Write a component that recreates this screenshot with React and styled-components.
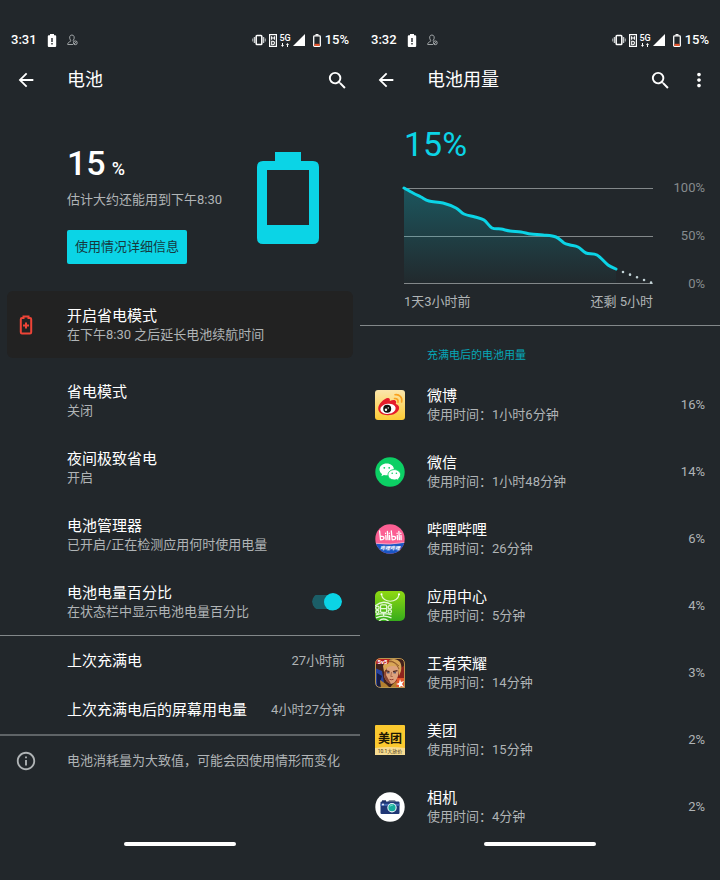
import React from "react";
import styled, { createGlobalStyle } from "styled-components";
import { MdArrowBack, MdInfoOutline, MdMoreVert, MdSearch } from "react-icons/md";

const color = {
  page: "#22272b",
  card: "#222222",
  accent: "#0bd4e6",
  heading: "#06a8b8",
  text: "#ffffff",
  muted: "#b0b4b6",
  faint: "#868b8e",
  line: "#83888a",
  alert: "#ee4437",
};

const GlobalStyle = createGlobalStyle`
  *, *::before, *::after { box-sizing: border-box; }
  body {
    margin: 0;
    background: ${color.page};
    color: ${color.text};
    font-family: Roboto, "Noto Sans CJK SC", sans-serif;
  }
  button { font-family: inherit; }
  svg { display: block; flex: none; }
`;

const Screens = styled.div`
  display: flex;
  min-height: 100vh;
`;

const Screen = styled.section`
  flex: 1 1 0;
  min-width: 0;
  display: flex;
  flex-direction: column;
  padding: 24px 0 34px;
`;

const StatusBar = styled.div`
  display: flex;
  align-items: center;
  justify-content: space-between;
  height: 32px;
  padding: 0 11px;
  font-size: 13px;
  font-weight: 500;
  line-height: 16px;
`;

const StatusGroup = styled.div`
  display: flex;
  align-items: center;
  gap: ${(p) => p.$gap}px;
`;

const Toolbar = styled.header`
  display: grid;
  grid-template-columns: 52px 1fr auto;
  align-items: center;
  height: 48px;
  padding: 0 ${(p) => p.$right}px 0 15px;
`;

const Title = styled.h1`
  margin: 0;
  font-size: 18px;
  font-weight: 400;
  line-height: 26px;
`;

const Actions = styled.div`
  display: flex;
  align-items: center;
  gap: 16px;
`;

const IconButton = styled.button`
  display: flex;
  width: max-content;
  padding: 0;
  border: 0;
  background: none;
  color: inherit;
  cursor: pointer;
`;

const HomeBar = styled.div`
  width: 112px;
  height: 4px;
  margin: auto auto 0;
  border-radius: 2px;
  background: #ffffff;
`;

const Hero = styled.div`
  display: flex;
  justify-content: space-between;
  padding: 39px 41px 27px 67px;
`;

const Level = styled.div`
  display: flex;
  align-items: baseline;
  gap: 6px;
  font-size: 34px;
  font-weight: 500;
  line-height: 40px;
`;

const LevelUnit = styled.span`
  font-size: 18px;
  line-height: 20px;
`;

const Estimate = styled.p`
  margin: 8px 0 21px;
  color: ${color.muted};
  font-size: 13px;
  line-height: 18px;
`;

const DetailsButton = styled.button`
  height: 34px;
  padding: 0 8px;
  border: 0;
  border-radius: 2px;
  background: ${color.accent};
  color: #16393f;
  font-size: 13px;
  line-height: 18px;
  cursor: pointer;
`;

const HeroArt = styled.div`
  padding-top: 9px;
`;

const TipCard = styled.div`
  display: grid;
  grid-template-columns: 52px 1fr;
  align-items: center;
  height: 67px;
  margin: 0 7px 9px;
  padding: 0 8px;
  border-radius: 6px;
  background: ${color.card};
`;

const List = styled.ul`
  margin: 0;
  padding: 0;
  list-style: none;
`;

const Row = styled.li`
  display: grid;
  grid-template-columns: 52px 1fr auto;
  align-items: center;
  min-height: ${(p) => (p.$compact ? 49 : 67)}px;
  padding: 0 15px;
`;

const Lead = styled.div`
  display: flex;
  color: ${color.muted};
`;

const Name = styled.div`
  font-size: 15px;
  line-height: 20px;
`;

const NameLabel = styled(Name).attrs({ as: "label" })`
  display: block;
`;

const Detail = styled.div`
  color: ${color.muted};
  font-size: 13px;
  line-height: 18px;
`;

const Rule = styled.hr`
  width: 100%;
  height: ${(p) => p.$weight || 1}px;
  margin: 0;
  border: 0;
  background: ${(p) => (p.$weight ? "#5f6467" : color.line)};
`;

const Switch = styled.input.attrs({ type: "checkbox", role: "switch" })`
  appearance: none;
  display: flex;
  align-items: center;
  width: 30px;
  height: 18px;
  margin: 0 3px;
  background: linear-gradient(#1b5e67, #1b5e67) center / 100% 14px no-repeat;
  border-radius: 9px;
  clip-path: inset(0 round 9px);
  cursor: pointer;

  &::before {
    content: "";
    width: 18px;
    height: 18px;
    border-radius: 50%;
    background: #b5babc;
  }
  &:checked::before {
    margin-left: auto;
    background: ${color.accent};
  }
`;

const Usage = styled.div`
  padding: 20px 15px 14px 44px;
`;

const UsageLevel = styled.div`
  margin-bottom: 15px;
  color: ${color.accent};
  font-size: 34px;
  line-height: 40px;
`;

const ChartGrid = styled.div`
  display: grid;
  grid-template-columns: 1fr 52px;
`;

const Plot = styled.svg`
  width: 100%;
  height: auto;
  margin: 9px 0;
  overflow: visible;
`;

const Scale = styled.div`
  display: flex;
  flex-direction: column;
  justify-content: space-between;
  color: ${color.faint};
  font-size: 13px;
  line-height: 18px;
  text-align: right;
`;

const Span = styled.div`
  display: flex;
  justify-content: space-between;
  color: ${color.muted};
  font-size: 13px;
  line-height: 18px;
`;

const SectionTitle = styled.h2`
  margin: 0;
  padding: 22px 15px 7px 67px;
  color: ${color.heading};
  font-size: 11px;
  font-weight: 400;
  line-height: 16px;
`;

/* ---------- status icons ---------- */

const BatteryWarn = () => (
  <svg width="10" height="13" viewBox="0 0 10 13">
    <path d="M3 0h4v1.3h1.2q1 0 1 1V12q0 1-1 1H1.8q-1 0-1-1V2.3q0-1 1-1H3z" fill="#fff" />
    <path d="M5 4v4M5 9v1.4" stroke={color.page} strokeWidth="1.4" />
  </svg>
);

const Person = () => (
  <svg width="11" height="12" viewBox="0 0 11 12" fill="none" stroke="#aeb2b4" strokeWidth=".9">
    <path d="M6 10.5H.7C.7 8.6 2 8 3.3 7.5 4 7.2 3.8 6.6 3.4 6 2 3.8 2.5 1 4.9 1s3 2.800 1.600 5c-.4.6-.5 1.100 0 1.400" />
    <circle cx="8.300" cy="8.800" r="1.900" />
    <path d="M7 10.100l2.600-2.600" />
  </svg>
);

const Vibrate = () => (
  <svg width="14" height="12" viewBox="0 0 14 12" fill="none">
    <rect x="4.200" y="1.500" width="5.600" height="9" rx=".8" stroke="#fff" strokeWidth="1.500" />
    <path d="M2.500 3v6M11.500 3v6" stroke="#c6c9ca" strokeWidth="1.500" />
    <path d="M.7 4.500v3M13.300 4.500v3" stroke="#a0a4a6" strokeWidth="1.200" />
  </svg>
);

const HdBadge = () => (
  <svg width="8" height="13" viewBox="0 0 8 13" fill="none" stroke="#fff">
    <rect x=".6" y=".6" width="6.800" height="11.800" strokeWidth="1.200" />
    <path d="M2.600 2.200v3.600M5.400 2.200v3.600M2.600 4h2.800M2.700 7.300h1.200q1.500 0 1.500 1.700t-1.500 1.700H2.700z" strokeWidth="1.100" />
  </svg>
);

const NetworkBox = styled.div`
  display: flex;
  flex-direction: column;
  align-items: center;
  font-size: 9px;
  line-height: 9px;
`;

const Network = () => (
  <NetworkBox>
    5G
    <svg width="8" height="4" viewBox="0 0 8 4" fill="#fff">
      <path d="M0 2h3L1.500 4zM1 0h1v2H1zM5 2l1.500-2L8 2zM6 2h1v2H6z" />
    </svg>
  </NetworkBox>
);

const Signal = () => (
  <svg width="12" height="12" viewBox="0 0 12 12">
    <path d="M12 0v12H0z" fill="#fff" />
  </svg>
);

const BatteryLow = () => (
  <svg width="8" height="13" viewBox="0 0 8 13">
    <path d="M2.500 0h3v1.500h-3z" fill="#fff" />
    <rect x=".7" y="1.900" width="6.600" height="10.400" rx=".8" fill="none" stroke="#fff" strokeWidth="1.300" />
    <path d="M1.400 9.800h5.200v2.200H1.400z" fill="#e2552f" />
  </svg>
);

function PhoneStatus({ time }) {
  return (
    <StatusBar>
      <StatusGroup $gap={10}>
        <span>{time}</span>
        <BatteryWarn />
        <Person />
      </StatusGroup>
      <StatusGroup $gap={3}>
        <Vibrate />
        <StatusGroup $gap={2}>
          <HdBadge />
          <Network />
          <StatusGroup $gap={8}>
            <Signal />
            <StatusGroup $gap={4}>
              <BatteryLow />
              <span>15%</span>
            </StatusGroup>
          </StatusGroup>
        </StatusGroup>
      </StatusGroup>
    </StatusBar>
  );
}

/* ---------- page icons ---------- */

const BigBattery = () => (
  <svg width="62" height="93" viewBox="0 0 62 93">
    <path
      fill={color.accent}
      fillRule="evenodd"
      d="M18 0h26v9h12q6 0 6 6v71q0 6-6 6H6q-6 0-6-6V15q0-6 6-6h12zM10 18v55h42V18z"
    />
  </svg>
);

const SaverIcon = () => (
  <svg width="22" height="22" viewBox="0 0 22 22" fill="none" stroke={color.alert} strokeWidth="2">
    <path d="M8.500 4V2.500h5V4H15q1.200 0 1.200 1.200v13.100q0 1.200-1.200 1.200H7q-1.200 0-1.200-1.200V5.200Q5.800 4 7 4z" />
    <path d="M11 8.500v6M8 11.500h6" />
  </svg>
);

/* ---------- app icons ---------- */

const AppSvg = ({ children }) => (
  <svg width="30" height="30" viewBox="0 0 30 30" aria-hidden="true">
    {children}
  </svg>
);

const Weibo = () => (
  <AppSvg>
    <linearGradient id="wb" x1="0" y1="0" x2="0" y2="1">
      <stop offset="0" stopColor="#fbe6ac" />
      <stop offset="1" stopColor="#fdcb35" />
    </linearGradient>
    <rect width="30" height="30" rx="3" fill="url(#wb)" />
    <path
      d="M3.200 18.500c0-4.500 6-10.200 9.600-10.500 2-.1 2.400 1.300 2 3 2.800-1.200 6-1.400 6.300.8.100.8-.1 1.500-.4 2.200 2 .6 3.600 1.800 3.400 4.200-.3 4.200-5.600 7-11.200 7-5.400 0-9.700-2.600-9.700-6.700z"
      fill="#e51c2a"
    />
    <ellipse cx="13" cy="18.800" rx="7.700" ry="5.100" fill="#fff" transform="rotate(-7 13 18.800)" />
    <circle cx="12.200" cy="18.700" r="4" fill="#15120f" />
    <circle cx="11" cy="19.800" r="1.200" fill="#fff" />
    <circle cx="13.300" cy="17.900" r=".7" fill="#fff" />
    <path d="M19.500 8.500c2.500-.3 4 1.300 3.500 3.600M20 4.700c4.600-.6 7.700 2.800 6.600 7.300" fill="none" stroke="#f9a01e" strokeWidth="1.600" strokeLinecap="round" />
  </AppSvg>
);

const WeChat = () => (
  <AppSvg>
    <circle cx="15" cy="15" r="14.700" fill="#0ccf64" />
    <path d="M11.700 6.500c-4 0-7.200 2.600-7.200 5.900 0 1.900 1 3.500 2.600 4.600l-.7 2.200 2.500-1.300c.9.300 1.800.4 2.800.4 4 0 7.200-2.600 7.200-5.900s-3.200-5.900-7.200-5.900z" fill="#fff" />
    <path
      d="M19.300 12.600c3.500 0 6.300 2.300 6.300 5.200 0 1.600-.9 3-2.200 4l.5 1.900-2.100-1.100c-.8.200-1.600.4-2.500.4-3.500 0-6.300-2.300-6.300-5.200s2.800-5.200 6.300-5.200z"
      fill="#fff"
      stroke="#0ccf64"
      strokeWidth=".9"
    />
    <g fill="#0ccf64">
      <circle cx="9.300" cy="10.800" r=".9" />
      <circle cx="14.200" cy="10.800" r=".9" />
      <circle cx="17.200" cy="16.300" r=".8" />
      <circle cx="21.400" cy="16.300" r=".8" />
    </g>
  </AppSvg>
);

const Bilibili = () => (
  <AppSvg>
    <clipPath id="bl">
      <circle cx="15" cy="15" r="14.700" />
    </clipPath>
    <g clipPath="url(#bl)">
      <rect width="30" height="30" fill="#fb5f93" />
      <path d="M0 19.500q15 2 30-1V30H0z" fill="#1a56c4" />
      <path d="M0 19.300q15 2 30-1" fill="none" stroke="#f7c3dc" strokeWidth=".7" />
    </g>
    <g fill="none" stroke="#fff" strokeWidth="1.300" strokeLinecap="round" strokeLinejoin="round">
      <path d="M4.600 7l.9 8.800q3.500-.1 3.500-1.900T5.300 12.200M10.800 11.500l.3 4.200M12.400 7.500l.6 8.200M14.500 11.500l.2 4.200" />
      <path d="M16.300 7l.9 8.800q3.500-.1 3.500-1.900T17 12.200M22.300 11.500l.3 4.200M23.900 7.500l.5 8.200M26 11.500l.1 4.200" />
      <path d="M10.600 9.200v.2M14.300 9.200v.2M22.100 9.200v.2M25.800 9.200v.2" />
    </g>
    <text x="15" y="26" textAnchor="middle" fontSize="5" fontWeight="700" fontStyle="italic" fill="#fff">哔哩哔哩</text>
  </AppSvg>
);

const AppCenter = () => (
  <AppSvg>
    <linearGradient id="ac" x1="0" y1="0" x2="0" y2="1">
      <stop offset="0" stopColor="#8fd913" />
      <stop offset="1" stopColor="#36ac1b" />
    </linearGradient>
    <clipPath id="acc">
      <rect width="30" height="30" rx="5" />
    </clipPath>
    <g clipPath="url(#acc)">
      <rect width="30" height="30" fill="url(#ac)" />
      <path d="M6.500 3.500c1 9 16.500 9 17.500 0" fill="none" stroke="#e7f8d4" strokeWidth="1.200" strokeLinecap="round" />
      <circle cx="6.500" cy="3.300" r="1" fill="#fff" />
      <circle cx="24" cy="3.300" r="1" fill="#fff" />
      <g fill="none" stroke="#e3f8d8" strokeWidth="1.300">
        <path d="M0 15q8-7 17-1" />
        <rect x="5.500" y="13.800" width="6.200" height="7.700" rx="1.500" />
        <path d="M6 17.600h5.500M8.600 21.500v3M1 23.800q7.500-2.500 15.500 0M1 26.800q7.500-3.500 15.500 0M4 30q4.500-4 9.500 0" />
        <circle cx="14.800" cy="16.300" r="1.700" />
        <circle cx="14.800" cy="20.500" r="1.700" />
        <circle cx="2.400" cy="16.800" r="1.700" />
        <circle cx="2.400" cy="20.800" r="1.500" />
      </g>
    </g>
  </AppSvg>
);

const Kings = () => (
  <AppSvg>
    <clipPath id="kg">
      <path d="M6 0h18q6 0 6 6v24H6q-6 0-6-6V6q0-6 6-6z" />
    </clipPath>
    <g clipPath="url(#kg)">
      <rect width="30" height="30" fill="#41211c" />
      <path d="M0 10l7 3 3 17H0z" fill="#28439c" />
      <path d="M2 15l5 3-2 6 6 6H2z" fill="#151b42" />
      <path d="M23 12l7-5v20H18z" fill="#8e231d" />
      <path d="M9 8q8-5 15 0l-1 10q-2 7-7 8-6-2-7-9z" fill="#dda27d" />
      <path d="M9 8l3 2-1 7 4 7 1 2q-6-2-7-9z" fill="#8a4633" />
      <path d="M8 8Q10 1 19 1q9 1 7 12l-2 5-1-9q-5-2-10 0l-4 5z" fill="#d9a656" />
      <path d="M11 5q6-4 13 3M13 3q7-1 11 8" fill="none" stroke="#8d562b" strokeWidth=".9" />
      <path d="M10.500 12.700l4 1M18 13.700l4.500-1" stroke="#532a20" strokeWidth="1.200" />
      <path d="M12 14.800h2.500M18.500 14.800H21" stroke="#253a65" strokeWidth="1" />
      <path d="M16.500 14l-.7 4.500h2" fill="none" stroke="#a15e43" strokeWidth=".8" />
      <path d="M14.500 21.300q2 .8 4 0" stroke="#943f32" strokeWidth="1" fill="none" />
      <path d="M5 22l6 4 4 4H6zM17 27l6-5v8h-8z" fill="#b3802f" />
      <path d="M0 0h15l-2 6H0z" fill="#bb211d" />
      <text x="2.500" y="6" fontSize="6" fontWeight="700" fill="#fff">5v5</text>
      <path d="M22 20h8v10h-9z" fill="#e5562b" />
      <path d="M25 21l1 3 3-1-2 3 2 3-3-1-2 2v-3l-3-1 3-1z" fill="#fff" />
    </g>
    <path d="M6 .5h18q5.500 0 5.500 5.500v23.500H6Q.5 29.500.5 24V6Q.5.500 6 .5z" fill="none" stroke="#b8954f" strokeWidth="1" />
  </AppSvg>
);

const Meituan = () => (
  <AppSvg>
    <rect width="30" height="30" rx="1" fill="#fbc92f" />
    <path d="M0 23q15-2 30 0v7H0z" fill="#f7dc92" />
    <text x="15" y="17.500" textAnchor="middle" fontSize="12" fontWeight="700" fill="#1d1705">美团</text>
    <text x="15" y="28" textAnchor="middle" fontSize="5" fill="#3f3212">10.1大放价</text>
  </AppSvg>
);

const Camera = () => (
  <AppSvg>
    <circle cx="15" cy="15" r="14.700" fill="#fff" />
    <path d="M7 8.300h4v1.700H7z" fill="#1d2c5c" />
    <rect x="5.500" y="9.500" width="19" height="12.500" rx="1" fill="#203775" />
    <path d="M5.500 11.800h19v2h-19z" fill="#466bb5" />
    <path d="M13 9.500l1-1h6l1 1z" fill="#14264f" />
    <circle cx="17" cy="15.700" r="4.700" fill="#e8f6f6" />
    <circle cx="17" cy="15.700" r="3.600" fill="#16ac9d" />
    <path d="M14.800 14.500q1-1.600 3-1.400" fill="none" stroke="#91e8d7" strokeWidth=".9" />
    <circle cx="8" cy="12.500" r=".9" fill="#fff" />
  </AppSvg>
);

/* ---------- discharge chart ---------- */

const points = [
  [0, 0], [9, 5], [17, 9], [25, 13], [39, 15], [52, 20], [60, 26], [71, 29],
  [80, 32], [88, 40], [97, 41], [106, 43], [117, 44], [127, 46], [139, 47],
  [152, 49], [160, 55], [166, 57], [174, 59], [182, 65], [193, 67], [204, 77], [212, 81],
];

function smoothPath(pts) {
  return pts.slice(1).reduce((d, p, i) => {
    const a = pts[Math.max(i - 1, 0)];
    const b = pts[i];
    const c = pts[Math.min(i + 2, pts.length - 1)];
    const c1 = [b[0] + (p[0] - a[0]) / 6, b[1] + (p[1] - a[1]) / 6];
    const c2 = [p[0] - (c[0] - b[0]) / 6, p[1] - (c[1] - b[1]) / 6];
    return `${d}C${c1} ${c2} ${p}`;
  }, `M${pts[0]}`);
}

const curve = smoothPath(points);

function Chart() {
  return (
    <Plot viewBox="0 0 249 96" role="img" aria-label="电池用量">
      <defs>
        <linearGradient id="fill" x1="0" y1="0" x2="0" y2="96" gradientUnits="userSpaceOnUse">
          <stop offset="0" stopColor={color.accent} stopOpacity=".27" />
          <stop offset="1" stopColor={color.accent} stopOpacity=".01" />
        </linearGradient>
      </defs>
      <path d="M0 .5h249M0 48.500h249M0 95.500h249" stroke={color.line} />
      <path d={`${curve}V95H0z`} fill="url(#fill)" />
      <path d="M219 84L248 95" stroke="#c3d3d7" strokeWidth="2.600" strokeLinecap="round" strokeDasharray="0 7.500" />
      <path d={curve} fill="none" stroke={color.accent} strokeWidth="3" strokeLinecap="round" />
    </Plot>
  );
}

/* ---------- data ---------- */

const settings = [
  { name: "省电模式", detail: "关闭" },
  { name: "夜间极致省电", detail: "开启" },
  { name: "电池管理器", detail: "已开启/正在检测应用何时使用电量" },
];

const stats = [
  { name: "上次充满电", value: "27小时前" },
  { name: "上次充满电后的屏幕用电量", value: "4小时27分钟" },
];

const apps = [
  { name: "微博", time: "1小时6分钟", share: "16%", Icon: Weibo },
  { name: "微信", time: "1小时48分钟", share: "14%", Icon: WeChat },
  { name: "哔哩哔哩", time: "26分钟", share: "6%", Icon: Bilibili },
  { name: "应用中心", time: "5分钟", share: "4%", Icon: AppCenter },
  { name: "王者荣耀", time: "14分钟", share: "3%", Icon: Kings },
  { name: "美团", time: "15分钟", share: "2%", Icon: Meituan },
  { name: "相机", time: "4分钟", share: "2%", Icon: Camera },
];

function BatteryScreen() {
  return (
    <Screen>
      <PhoneStatus time="3:31" />
      <Toolbar $right={11}>
        <IconButton aria-label="返回"><MdArrowBack size={22} /></IconButton>
        <Title>电池</Title>
        <IconButton aria-label="搜索"><MdSearch size={23} /></IconButton>
      </Toolbar>
      <Hero>
        <div>
          <Level>15<LevelUnit>%</LevelUnit></Level>
          <Estimate>估计大约还能用到下午8:30</Estimate>
          <DetailsButton>使用情况详细信息</DetailsButton>
        </div>
        <HeroArt><BigBattery /></HeroArt>
      </Hero>
      <TipCard>
        <Lead><SaverIcon /></Lead>
        <div>
          <Name>开启省电模式</Name>
          <Detail>在下午8:30 之后延长电池续航时间</Detail>
        </div>
      </TipCard>
      <List>
        {settings.map((s) => (
          <Row key={s.name}>
            <Lead />
            <div>
              <Name>{s.name}</Name>
              <Detail>{s.detail}</Detail>
            </div>
          </Row>
        ))}
        <Row>
          <Lead />
          <div>
            <NameLabel htmlFor="percent">电池电量百分比</NameLabel>
            <Detail>在状态栏中显示电池电量百分比</Detail>
          </div>
          <Switch id="percent" defaultChecked />
        </Row>
      </List>
      <Rule />
      <List>
        {stats.map((s) => (
          <Row key={s.name} $compact>
            <Lead />
            <Name>{s.name}</Name>
            <Detail>{s.value}</Detail>
          </Row>
        ))}
      </List>
      <Rule $weight={2} />
      <Row as="div" $compact>
        <Lead><MdInfoOutline size={22} /></Lead>
        <Detail>电池消耗量为大致值，可能会因使用情形而变化</Detail>
      </Row>
      <HomeBar />
    </Screen>
  );
}

function UsageScreen() {
  return (
    <Screen>
      <PhoneStatus time="3:32" />
      <Toolbar $right={10}>
        <IconButton aria-label="返回"><MdArrowBack size={22} /></IconButton>
        <Title>电池用量</Title>
        <Actions>
          <IconButton aria-label="搜索"><MdSearch size={23} /></IconButton>
          <IconButton aria-label="更多"><MdMoreVert size={22} /></IconButton>
        </Actions>
      </Toolbar>
      <Usage>
        <UsageLevel>15%</UsageLevel>
        <ChartGrid>
          <Chart />
          <Scale>
            <span>100%</span>
            <span>50%</span>
            <span>0%</span>
          </Scale>
          <Span>
            <span>1天3小时前</span>
            <span>还剩 5小时</span>
          </Span>
        </ChartGrid>
      </Usage>
      <Rule />
      <SectionTitle>充满电后的电池用量</SectionTitle>
      <List>
        {apps.map(({ name, time, share, Icon }) => (
          <Row key={name}>
            <Lead><Icon /></Lead>
            <div>
              <Name>{name}</Name>
              <Detail>使用时间：{time}</Detail>
            </div>
            <Detail>{share}</Detail>
          </Row>
        ))}
      </List>
      <HomeBar />
    </Screen>
  );
}

export default function App() {
  return (
    <>
      <GlobalStyle />
      <Screens>
        <BatteryScreen />
        <UsageScreen />
      </Screens>
    </>
  );
}
